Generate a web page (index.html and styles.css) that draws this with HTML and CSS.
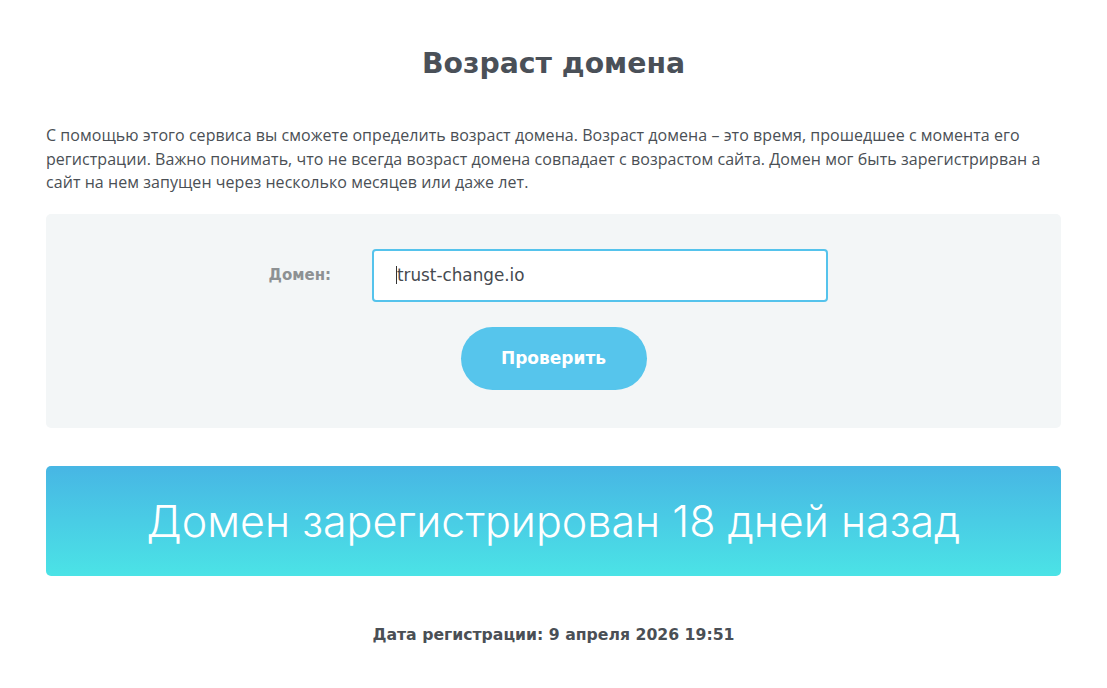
FILE: index.html
```html
<!DOCTYPE html>
<html lang="ru">
<head>
<meta charset="utf-8">
<title>Возраст домена</title>
<link rel="stylesheet" href="styles.css">
</head>
<body>
<main class="page">
  <h1 class="title">Возраст домена</h1>
  <p class="intro">С помощью этого сервиса вы сможете определить возраст домена. Возраст домена – это время, прошедшее с момента его регистрации. Важно понимать, что не всегда возраст домена совпадает с возрастом сайта. Домен мог быть зарегистрирван а сайт на нем запущен через несколько месяцев или даже лет.</p>
  <form class="check-box">
    <div class="field-row">
      <label class="field-label" for="domain">Домен:</label>
      <div class="field-input"><span class="caret"></span>trust-change.io</div>
    </div>
    <button type="button" class="btn">Проверить</button>
  </form>
  <div class="result">Домен зарегистрирован 18 дней назад</div>
  <p class="reg-date">Дата регистрации: 9 апреля 2026 19:51</p>
</main>
</body>
</html>
```
FILE: styles.css
```css
* { box-sizing: border-box; }
html, body { margin: 0; padding: 0; background: #fff; }
body { font-family: "Open Sans", "Noto Sans", sans-serif; color: #4a4f55; }
.page { width: 1015px; margin: 0 auto; padding-top: 42px; }
.title {
  margin: 0;
  text-align: center;
  font-family: "DejaVu Sans", sans-serif;
  font-weight: 700;
  font-size: 28.3px;
  line-height: 44px;
  color: #4a5058;
}
.intro {
  margin: 38px 0 0;
  font-size: 16px;
  letter-spacing: 0.05px;
  line-height: 23.5px;
  color: #4a4f55;
}
.check-box {
  margin-top: 19px;
  background: #f3f6f7;
  border-radius: 5px;
  height: 214px;
  padding-top: 35px;
  display: flex;
  flex-direction: column;
  align-items: center;
}
.field-row { display: flex; align-items: center; margin-right: 93px; }
.field-label {
  width: 186px;
  text-align: right;
  padding-right: 41px;
  font-family: "DejaVu Sans", sans-serif;
  font-weight: 700;
  font-size: 15px;
  color: #8d9193;
}
.field-input {
  width: 456px;
  height: 53px;
  border: 2px solid #55c3ec;
  border-radius: 4px;
  background: #fff;
  padding-left: 22px;
  display: flex;
  align-items: center;
  font-family: "DejaVu Sans", sans-serif;
  font-size: 16.8px;
  color: #454a50;
}
.caret { width: 1px; height: 18px; background: #333; }
.btn {
  margin-top: 25px;
  width: 186px;
  height: 63px;
  border: 0;
  border-radius: 32px;
  background: #56c5ec;
  color: #fff;
  font-family: "DejaVu Sans", sans-serif;
  font-weight: 700;
  font-size: 17px;
}
.result {
  margin-top: 38px;
  height: 110px;
  border-radius: 5px;
  background: linear-gradient(to bottom, #47b6e4, #4be3e6);
  color: #fff;
  display: flex;
  align-items: center;
  justify-content: center;
  font-family: "Inter", sans-serif;
  font-weight: 300;
  font-size: 43px;
}
.reg-date {
  margin: 49px 0 0;
  text-align: center;
  font-family: "DejaVu Sans", sans-serif;
  font-weight: 700;
  font-size: 15.7px;
  color: #4a4f55;
}
```
